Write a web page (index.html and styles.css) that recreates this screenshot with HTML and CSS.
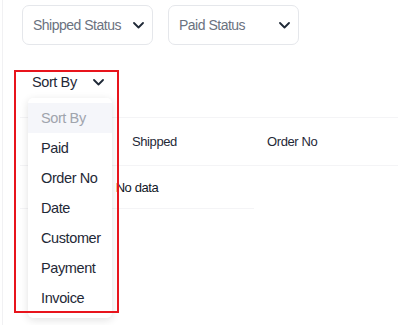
FILE: index.html
```html
<!DOCTYPE html>
<html lang="en">
<head>
    <meta charset="UTF-8">
    <meta name="viewport" content="width=device-width, initial-scale=1.0">
    <title>Orders</title>
    <link rel="stylesheet" href="styles.css">
</head>
<body>
    <div class="page">
        <div class="filters">
            <div class="select">
                <span>Shipped Status</span>
                <svg class="chev" width="11" height="7" viewBox="0 0 11 7"><polyline points="1,1 5.5,5.5 10,1"/></svg>
            </div>
            <div class="select">
                <span>Paid Status</span>
                <svg class="chev" width="11" height="7" viewBox="0 0 11 7"><polyline points="1,1 5.5,5.5 10,1"/></svg>
            </div>
        </div>

        <div class="toolbar">
            <div class="sort">
                <span>Sort By</span>
                <svg class="chev" width="11" height="7" viewBox="0 0 11 7"><polyline points="1,1 5.5,5.5 10,1"/></svg>
                <ul class="menu">
                    <li class="placeholder">Sort By</li>
                    <li>Paid</li>
                    <li>Order No</li>
                    <li>Date</li>
                    <li>Customer</li>
                    <li>Payment</li>
                    <li>Invoice</li>
                </ul>
            </div>
        </div>

        <table class="orders">
            <colgroup>
                <col class="c-first">
                <col class="c-col">
                <col class="c-col">
                <col class="c-col">
            </colgroup>
            <thead>
                <tr>
                    <th></th>
                    <th>Shipped</th>
                    <th>Order No</th>
                    <th></th>
                </tr>
            </thead>
        </table>
        <div class="empty">No data</div>

        <div class="highlight"></div>
    </div>
</body>
</html>
```

FILE: styles.css
```css
* { margin: 0; padding: 0; box-sizing: border-box; }

body {
    font-family: "Liberation Sans", Arial, sans-serif;
    background: #fff;
    color: #1f2937;
    letter-spacing: -0.4px;
    overflow: hidden;
}

.page {
    position: relative;
    height: 325px;
    overflow: hidden;
    border-left: 1px solid #f1f1f3;
    margin-left: 2px;
}

.filters {
    display: flex;
    gap: 15px;
    padding: 5px 0 0 19px;
}

.select {
    width: 131px;
    height: 40px;
    border: 1px solid #e5e7eb;
    border-radius: 7px;
    display: flex;
    align-items: center;
    justify-content: space-between;
    padding: 0 8px 0 10px;
    font-size: 14px;
    letter-spacing: -0.5px;
    white-space: nowrap;
    color: #6b7280;
}

.chev {
    flex-shrink: 0;
    fill: none;
    stroke: #1f2937;
    stroke-width: 1.8;
    stroke-linecap: round;
    stroke-linejoin: round;
}

.toolbar {
    margin-top: 25px;
    padding-left: 29px;
    height: 24px;
}

.sort {
    position: relative;
    display: flex;
    align-items: center;
    gap: 16px;
    height: 24px;
    font-size: 14.5px;
    color: #1f2937;
}

.menu {
    position: absolute;
    left: -4px;
    top: 28px;
    width: 84px;
    padding: 5px 0;
    list-style: none;
    background: #fff;
    border-radius: 5px;
    box-shadow: 0 2px 8px rgba(0,0,0,0.12);
    z-index: 2;
}

.menu li {
    height: 30px;
    line-height: 30px;
    padding-left: 13px;
    font-size: 14.5px;
    color: #1f2937;
}

.menu li.placeholder {
    color: #a0a4ad;
    background: #f5f6fa;
}

.orders {
    margin-top: 23px;
    margin-left: 17px;
    border-collapse: collapse;
    table-layout: fixed;
    width: 500px;
}

.c-first { width: 96px; }
.c-col { width: 135px; }

.orders th {
    height: 48px;
    text-align: left;
    font-weight: normal;
    font-size: 13px;
    color: #1f2937;
    padding-left: 16px;
    border-top: 1px solid #f4f4f6;
    border-bottom: 1px solid #f4f4f6;
}

.empty {
    margin-left: 17px;
    width: 234px;
    height: 43px;
    line-height: 43px;
    text-align: center;
    font-size: 13px;
    color: #111827;
    border-bottom: 1px solid #f4f4f6;
}

.highlight {
    position: absolute;
    left: 11px;
    top: 70px;
    width: 105px;
    height: 243px;
    border: 2px solid #e8141c;
    z-index: 3;
    pointer-events: none;
}
```
